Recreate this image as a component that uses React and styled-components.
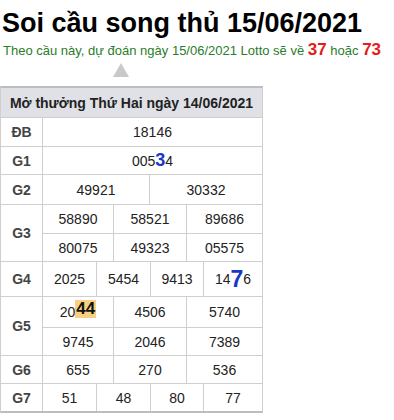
import React from 'react'
import styled, { createGlobalStyle } from 'styled-components'

const Global = createGlobalStyle`
  body {
    margin: 0;
    background: #fff;
    font-family: "Liberation Sans", Arial, sans-serif;
  }
`

const Page = styled.div`
  display: flex;
  flex-direction: column;
  align-items: flex-start;
`

const Title = styled.h1`
  margin: 7px 0 0 2px;
  font-size: 27px;
  line-height: 32px;
  font-weight: bold;
  color: #000;
`

const Lead = styled.p`
  margin: 2px 0 0 3px;
  font-size: 13px;
  line-height: 18px;
  color: #2a7d2a;
`

const Num = styled.b`
  color: #e31b1b;
  font-size: 17px;
`

const Arrow = styled.div`
  margin: 3px 0 0 113px;
  width: 0;
  height: 0;
  border-left: 8px solid transparent;
  border-right: 8px solid transparent;
  border-bottom: 14px solid #c9c9c9;
`

const Board = styled.div`
  margin-top: 9px;
  width: 263px;
  box-sizing: border-box;
  border: 1px solid #cfcfcf;
  border-top: 2px solid #bdbdbd;
  border-bottom: 2px solid #bdbdbd;
  font-size: 14px;
  color: #222;
`

const Head = styled.div`
  height: 29px;
  display: flex;
  align-items: center;
  justify-content: center;
  background: #dfe1e6;
  border-bottom: 1px solid #cfcfcf;
  font-weight: bold;
  font-size: 14px;
  color: #222;
`

const Prize = styled.div`
  display: grid;
  grid-template-columns: 42px 1fr;
  border-bottom: 1px solid #cfcfcf;
  &:last-child {
    border-bottom: none;
  }
`

const Label = styled.div`
  display: flex;
  align-items: center;
  justify-content: center;
  border-right: 1px solid #cfcfcf;
  font-weight: bold;
  color: #444;
`

const Lines = styled.div`
  display: flex;
  flex-direction: column;
`

const Line = styled.div`
  display: grid;
  grid-template-columns: ${p => p.$cols};
  height: ${p => p.$h}px;
  & + & {
    border-top: 1px solid #cfcfcf;
  }
`

const Cell = styled.div`
  display: flex;
  align-items: center;
  justify-content: center;
  & + & {
    border-left: 1px solid #cfcfcf;
  }
`

const Big = styled.b`
  color: #1738c9;
  font-size: ${p => p.$size}px;
`

const Hit = styled.b`
  background: #f9d081;
  color: #111;
  font-size: 17px;
  line-height: 18px;
  padding: 0 1px;
  align-self: flex-start;
  margin-top: 3px;
`

const COLS = {
  1: '1fr',
  2: '106px 1fr',
  3: '70px 73px 1fr',
  4: '53px 54px 53px 1fr',
}

const prizes = [
  { label: 'ĐB', lines: [{ h: 28, cells: ['18146'] }] },
  { label: 'G1', lines: [{ h: 27, cells: [<>005<Big $size={18}>3</Big>4</>] }] },
  { label: 'G2', lines: [{ h: 29, cells: ['49921', '30332'] }] },
  {
    label: 'G3',
    lines: [
      { h: 28, cells: ['58890', '58521', '89686'] },
      { h: 27, cells: ['80075', '49323', '05575'] },
    ],
  },
  {
    label: 'G4',
    lines: [{ h: 34, cells: ['2025', '5454', '9413', <>14<Big $size={23}>7</Big>6</>] }],
  },
  {
    label: 'G5',
    lines: [
      { h: 30, cells: [<>20<Hit>44</Hit></>, '4506', '5740'] },
      { h: 27, cells: ['9745', '2046', '7389'] },
    ],
  },
  { label: 'G6', lines: [{ h: 27, cells: ['655', '270', '536'] }] },
  { label: 'G7', lines: [{ h: 27, cells: ['51', '48', '80', '77'] }] },
]

export default function App() {
  return (
    <Page>
      <Global />
      <Title>Soi cầu song thủ 15/06/2021</Title>
      <Lead>
        Theo cầu này, dự đoán ngày 15/06/2021 Lotto sẽ về <Num>37</Num> hoặc <Num>73</Num>
      </Lead>
      <Arrow />
      <Board>
        <Head>Mở thưởng Thứ Hai ngày 14/06/2021</Head>
        {prizes.map(p => (
          <Prize key={p.label}>
            <Label>{p.label}</Label>
            <Lines>
              {p.lines.map((l, i) => (
                <Line key={i} $h={l.h} $cols={COLS[l.cells.length]}>
                  {l.cells.map((c, j) => (
                    <Cell key={j}>{c}</Cell>
                  ))}
                </Line>
              ))}
            </Lines>
          </Prize>
        ))}
      </Board>
    </Page>
  )
}
